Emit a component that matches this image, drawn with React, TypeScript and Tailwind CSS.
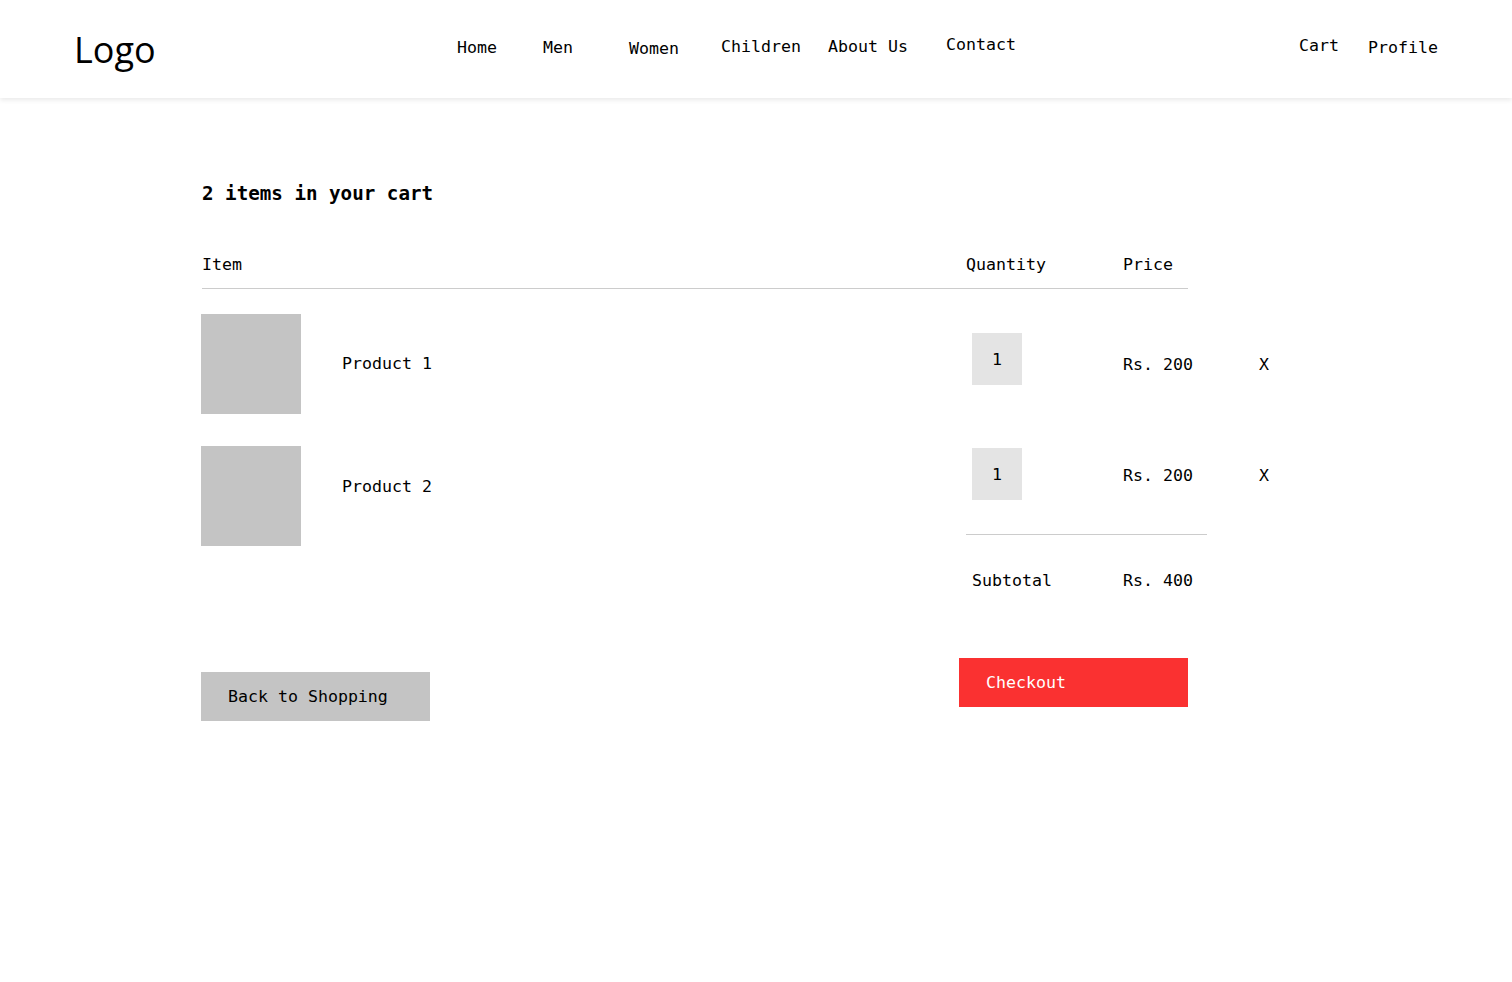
import React from 'react';

const mono = { fontFamily: '"DejaVu Sans Mono", "Liberation Mono", monospace' };

const navItems = [
  { label: 'Home', cls: 'w-[86px] mt-[38px]' },
  { label: 'Men', cls: 'w-[86px] mt-[38px]' },
  { label: 'Women', cls: 'w-[92px] mt-[39px]' },
  { label: 'Children', cls: 'w-[107px] mt-[37px]' },
  { label: 'About Us', cls: 'w-[118px] mt-[37px]' },
  { label: 'Contact', cls: 'w-[353px] mt-[35px]' },
  { label: 'Cart', cls: 'w-[69px] mt-[36px]' },
  { label: 'Profile', cls: 'mt-[38px]' },
];

const products = [
  { name: 'Product 1', rowCls: 'mt-[25px]', textCls: 'mt-[40px]' },
  { name: 'Product 2', rowCls: 'mt-[32px]', textCls: 'mt-[31px]' },
];

const App: React.FC = () => {
  return (
    <div className="min-h-screen bg-white text-black text-[16.6px] leading-[20px]" style={mono}>
      <header className="relative z-10 h-[98px] bg-white shadow-[0_2px_5px_rgba(0,0,0,0.09)] flex items-start pl-[74px]">
        <div className="w-[383px] mt-[32px]">
          <span
            className="text-[36px] leading-[36px]"
            style={{ fontFamily: '"Open Sans", "Noto Sans", sans-serif' }}
          >
            Logo
          </span>
        </div>
        <nav className="flex items-start">
          {navItems.map((n) => (
            <a key={n.label} className={n.cls}>
              {n.label}
            </a>
          ))}
        </nav>
      </header>

      <main className="pl-[201px] pt-[84px]">
        <h1 className="pl-px text-[19.2px] leading-[24px] font-bold">2 items in your cart</h1>

        <div className="mt-[49px] flex">
          <div className="w-[765px] pl-px">Item</div>
          <div className="w-[157px]">Quantity</div>
          <div>Price</div>
        </div>
        <div className="mt-[13px] ml-px h-px w-[986px] bg-[#cccccc]" />

        <div className="flex">
          {/* products */}
          <div className="w-[765px] flex flex-col">
            {products.map((p) => (
              <div key={p.name} className={`flex items-start ${p.rowCls}`}>
                <div className="w-[100px] h-[100px] bg-[#c4c4c4]" />
                <span className={`ml-[41px] ${p.textCls}`}>{p.name}</span>
              </div>
            ))}
            <button
              type="button"
              className="mt-[126px] w-[229px] h-[49px] bg-[#c4c4c4] flex items-center pl-[27px] text-left"
            >
              Back to Shopping
            </button>
          </div>

          {/* quantity / price / totals */}
          <div className="flex flex-col">
            <div className="mt-[44px] flex items-start">
              <div className="w-[157px] pl-[6px]">
                <div className="w-[50px] h-[52px] pt-px bg-[#e4e4e4] flex items-center justify-center">1</div>
              </div>
              <div className="w-[136px] mt-[22px]">Rs. 200</div>
              <button type="button" className="mt-[22px]">X</button>
            </div>
            <div className="mt-[63px] flex items-start">
              <div className="w-[157px] pl-[6px]">
                <div className="w-[50px] h-[52px] pt-px bg-[#e4e4e4] flex items-center justify-center">1</div>
              </div>
              <div className="w-[136px] mt-[18px]">Rs. 200</div>
              <button type="button" className="mt-[18px]">X</button>
            </div>
            <div className="mt-[34px] h-px w-[241px] bg-[#cccccc]" />
            <div className="mt-[36px] flex">
              <div className="w-[157px] pl-[6px]">Subtotal</div>
              <div>Rs. 400</div>
            </div>
            <button
              type="button"
              className="mt-[67px] -ml-[7px] w-[229px] h-[49px] bg-[#fa3131] text-white flex items-center pl-[27px] text-left"
            >
              Checkout
            </button>
          </div>
        </div>
      </main>
    </div>
  );
};

export default App;
